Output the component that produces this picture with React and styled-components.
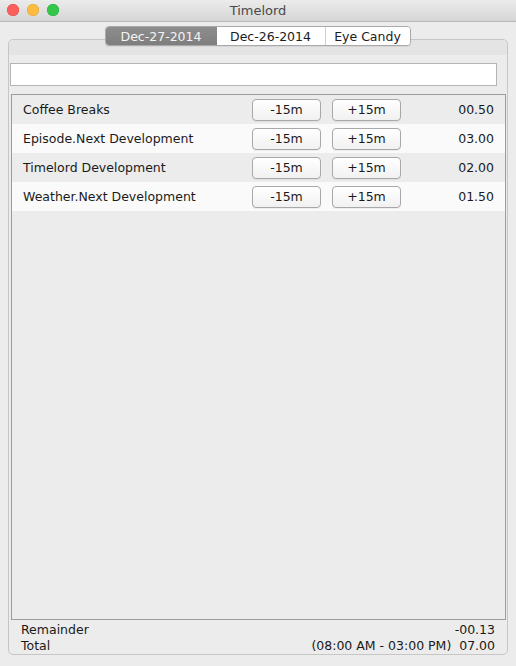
import styled, { createGlobalStyle } from "styled-components";

const GlobalStyle = createGlobalStyle`
  html, body {
    margin: 0;
    padding: 0;
    background: #ececec;
  }
  body {
    font-family: "DejaVu Sans", "Liberation Sans", sans-serif;
    font-size: 12px;
    color: #1a1a1a;
  }
`;

const rows = [
  { name: "Coffee Breaks", value: "00.50" },
  { name: "Episode.Next Development", value: "03.00" },
  { name: "Timelord Development", value: "02.00" },
  { name: "Weather.Next Development", value: "01.50" },
];

const tabs = [
  { label: "Dec-27-2014", width: 111, active: true },
  { label: "Dec-26-2014", width: 108 },
  { label: "Eye Candy", width: 85, divider: true },
];

const App = () => {
  return (
    <Window>
      <GlobalStyle />
      <TitleBar>
        <Lights>
          <Light $color="#fc605c" $edge="#de4a46" />
          <Light $color="#fdbc40" $edge="#dea234" />
          <Light $color="#34c84a" $edge="#28a83b" />
        </Lights>
        <Title>Timelord</Title>
      </TitleBar>
      <Content>
        <TabStrip>
          <Segments>
            {tabs.map((t) => (
              <Segment key={t.label} $active={t.active} $divider={t.divider} $width={t.width}>
                {t.label}
              </Segment>
            ))}
          </Segments>
        </TabStrip>
        <Panel>
          <Band />
          <SearchRow>
            <SearchField type="text" />
          </SearchRow>
          <Table>
            {rows.map((r, i) => (
              <Row key={r.name} $odd={i % 2 === 1}>
                <Name>{r.name}</Name>
                <Button>-15m</Button>
                <Button $gap>+15m</Button>
                <Value>{r.value}</Value>
              </Row>
            ))}
          </Table>
          <Footer>
            <FooterLine>
              <span>Remainder</span>
              <span>-00.13</span>
            </FooterLine>
            <FooterLine>
              <span>Total</span>
              <span>(08:00 AM - 03:00 PM)&nbsp;&nbsp;07.00</span>
            </FooterLine>
          </Footer>
        </Panel>
      </Content>
    </Window>
  );
};

export default App;

const Window = styled.div`
  width: 516px;
  height: 666px;
  display: flex;
  flex-direction: column;
  background: #ececec;
  overflow: hidden;
`;

const TitleBar = styled.div`
  height: 22px;
  flex-shrink: 0;
  display: flex;
  align-items: center;
  justify-content: center;
  position: relative;
  background: linear-gradient(#ebebeb, #d6d6d6);
  border-bottom: 1px solid #b9b9b9;
  box-sizing: border-box;
`;

const Lights = styled.div`
  position: absolute;
  left: 7px;
  top: 4px;
  display: flex;
  gap: 8px;
`;

const Light = styled.div`
  width: 12px;
  height: 12px;
  border-radius: 50%;
  background: ${(p) => p.$color};
  box-shadow: inset 0 0 0 0.5px ${(p) => p.$edge};
`;

const Title = styled.div`
  font-size: 13px;
  color: #4a4a4a;
`;

const Content = styled.div`
  flex: 1;
  display: flex;
  flex-direction: column;
  padding: 4px 8px 11px 8px;
  min-height: 0;
`;

const TabStrip = styled.div`
  display: flex;
  justify-content: center;
  margin-left: -1px;
  margin-bottom: -7px;
  position: relative;
  z-index: 1;
`;

const Segments = styled.div`
  display: flex;
  height: 18px;
  border: 1px solid #a9a9a9;
  border-radius: 4px;
  background: #ffffff;
  overflow: hidden;
  box-shadow: 0 1px 0 rgba(0, 0, 0, 0.06);
`;

const Segment = styled.div`
  width: ${(p) => p.$width}px;
  display: flex;
  align-items: center;
  justify-content: center;
  font-size: 12.5px;
  box-sizing: border-box;
  color: ${(p) => (p.$active ? "#f4f4f4" : "#1c1c1c")};
  background: ${(p) => (p.$active ? "linear-gradient(#8e8e8e, #7e7e7e)" : "#ffffff")};
  border-left: ${(p) => (p.$divider ? "1px solid #d0d0d0" : "none")};
`;

const Panel = styled.div`
  flex: 1;
  display: flex;
  flex-direction: column;
  border: 1px solid #c6c6c6;
  border-radius: 5px;
  background: #ececec;
  min-height: 0;
`;

const Band = styled.div`
  height: 15px;
  background: #e4e4e4;
  border-radius: 5px 5px 0 0;
`;

const SearchRow = styled.div`
  padding: 8px 10px 8px 1px;
`;

const SearchField = styled.input`
  display: block;
  width: 100%;
  height: 23px;
  box-sizing: border-box;
  border: 1px solid #b4b4b4;
  background: #ffffff;
  outline: none;
  margin: 0;
`;

const Table = styled.div`
  flex: 1;
  margin: 0 1px 0 2px;
  border: 1px solid #9c9c9c;
  background: #ececec;
`;

const Row = styled.div`
  height: 29px;
  display: flex;
  align-items: center;
  padding: 0 11px;
  background: ${(p) => (p.$odd ? "#fafafa" : "#ececec")};
`;

const Name = styled.div`
  flex: 1;
  font-size: 12.5px;
`;

const Button = styled.div`
  width: 69px;
  height: 22px;
  box-sizing: border-box;
  margin-left: ${(p) => (p.$gap ? "11px" : "0")};
  display: flex;
  align-items: center;
  justify-content: center;
  font-size: 12.5px;
  border: 1px solid #a8a8a8;
  border-radius: 4px;
  background: linear-gradient(#ffffff, #f1f1f1);
  box-shadow: 0 1px 0 rgba(0, 0, 0, 0.05);
`;

const Value = styled.div`
  width: 93px;
  text-align: right;
  font-size: 12.5px;
`;

const Footer = styled.div`
  padding: 2px 12px 0 12px;
  display: flex;
  flex-direction: column;
`;

const FooterLine = styled.div`
  display: flex;
  justify-content: space-between;
  height: 16px;
  line-height: 16px;
  font-size: 12.5px;
`;
